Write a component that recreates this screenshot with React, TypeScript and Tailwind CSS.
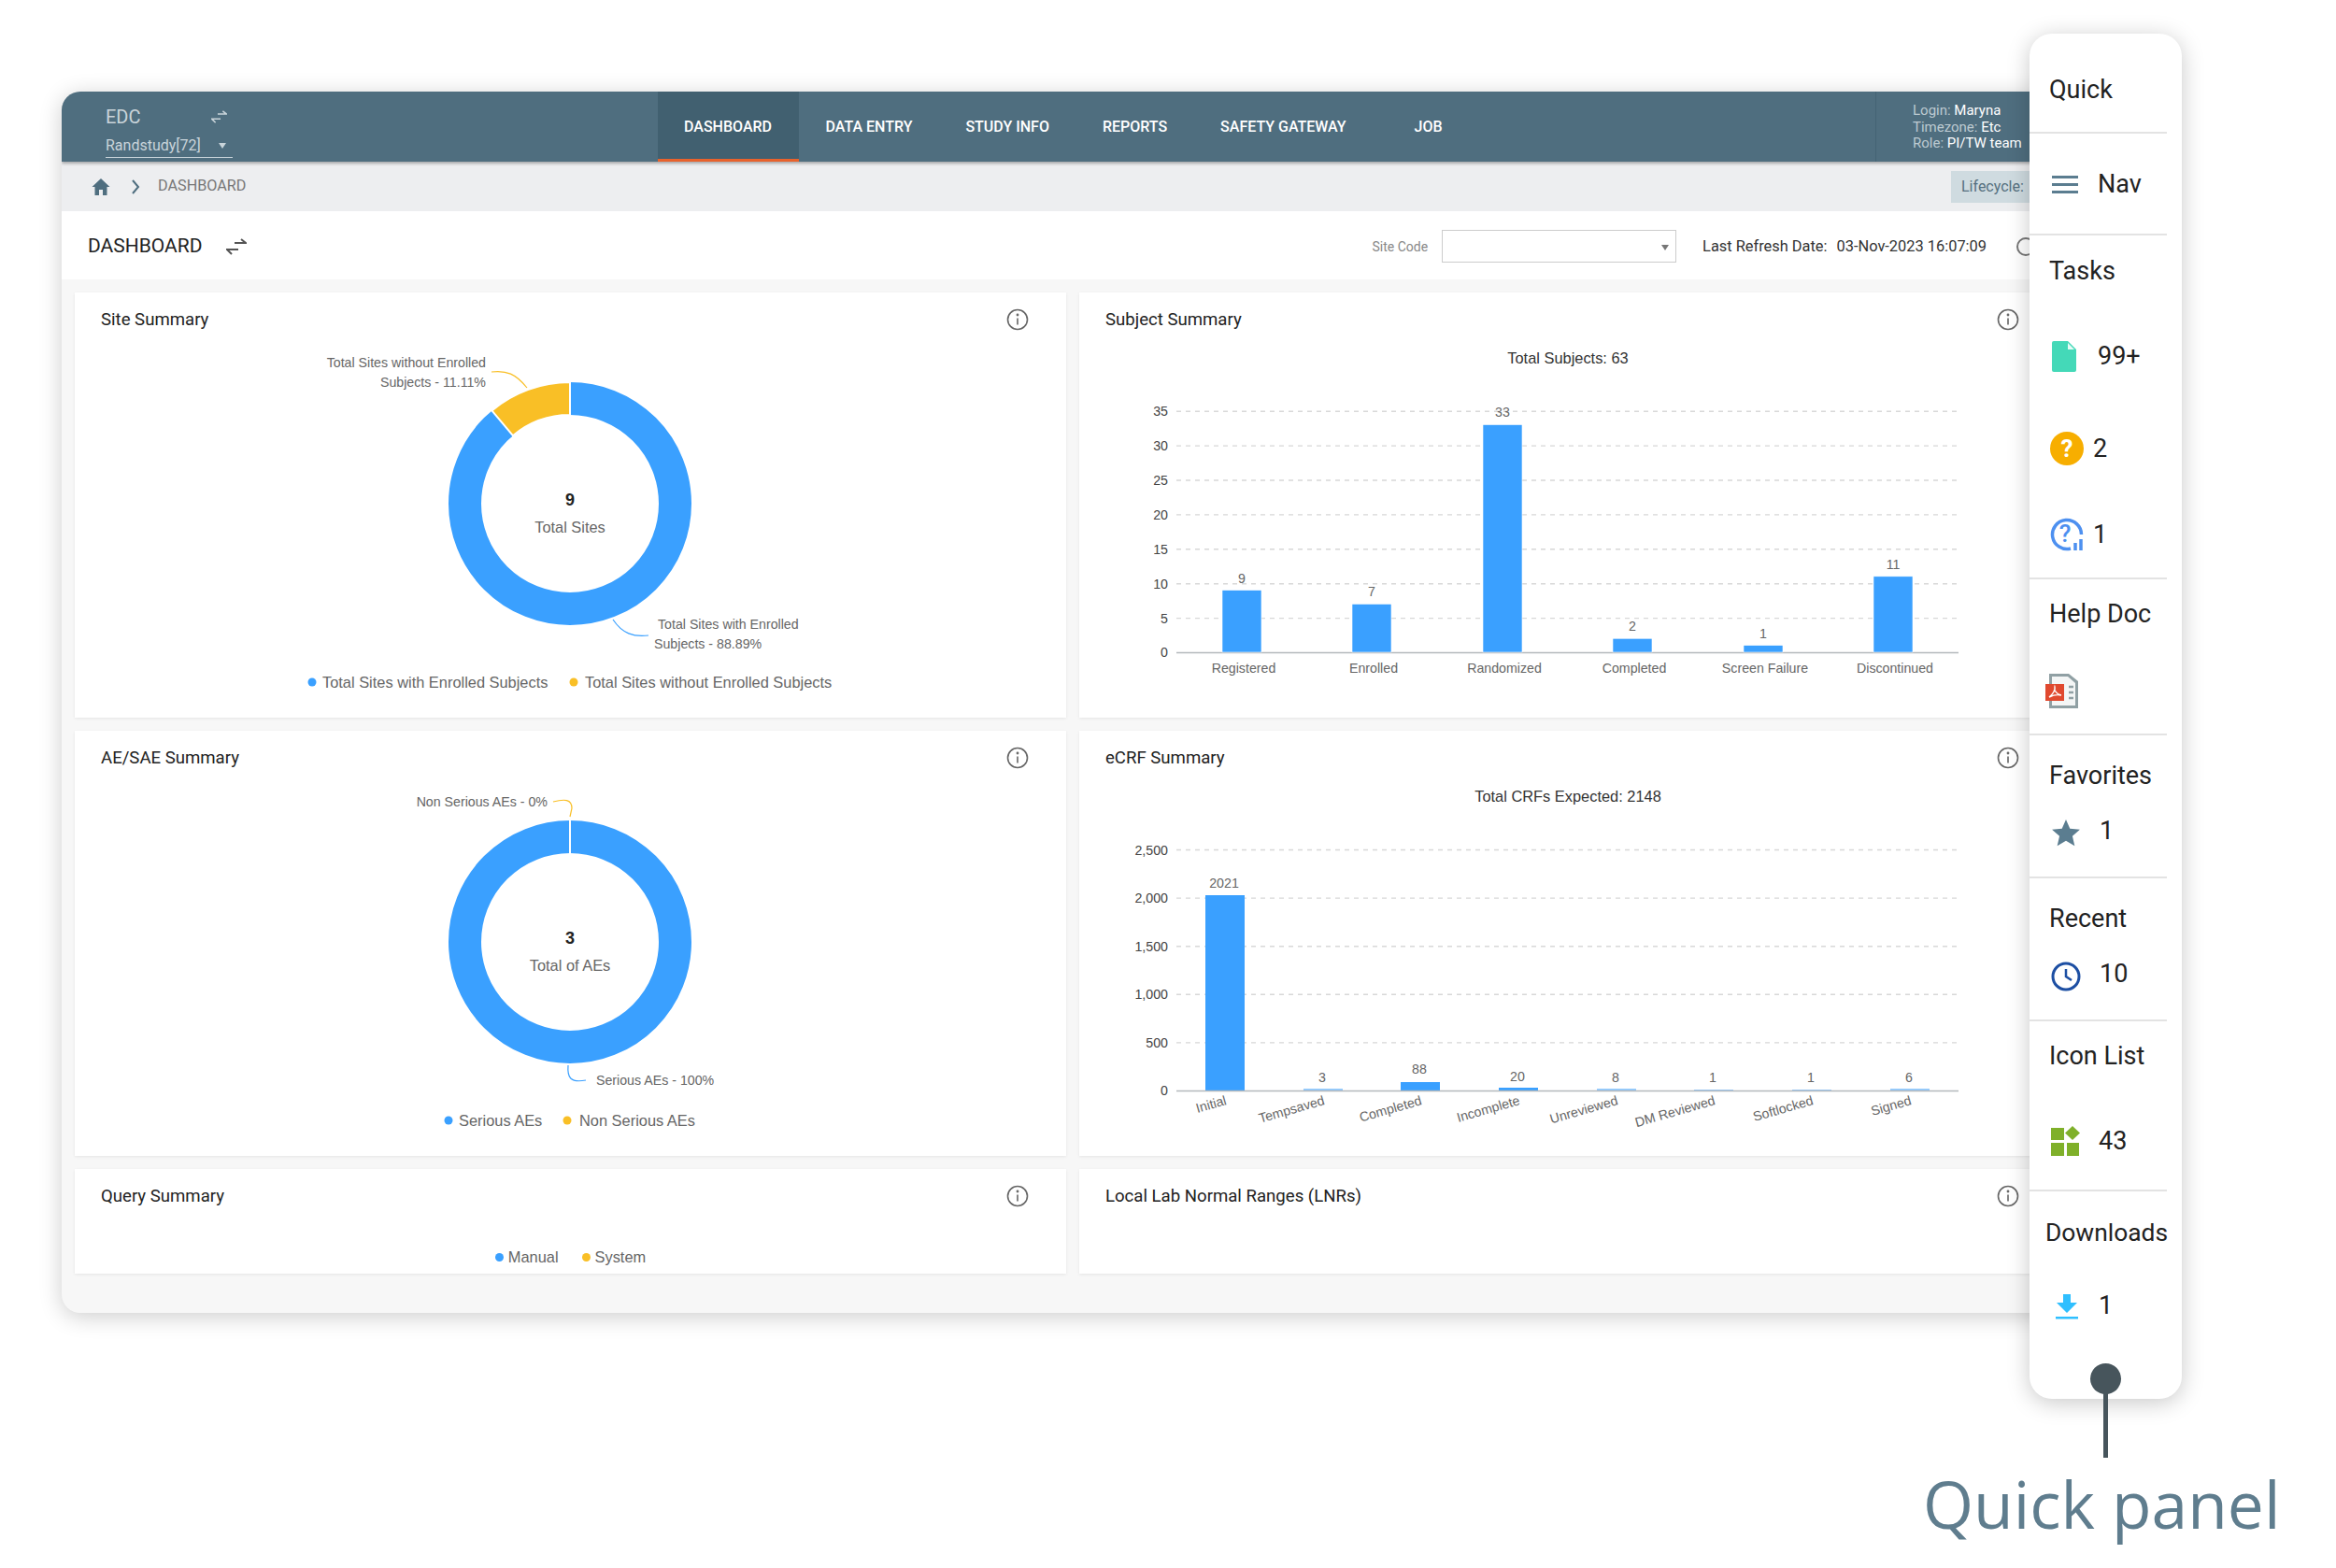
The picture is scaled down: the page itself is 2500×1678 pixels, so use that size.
const BLUE = "#3aa0ff";
const YELLOW = "#f9bf26";

const subjectBars = [
  { label: "Registered", value: 9, x: 1329 },
  { label: "Enrolled", value: 7, x: 1468 },
  { label: "Randomized", value: 33, x: 1608 },
  { label: "Completed", value: 2, x: 1747 },
  { label: "Screen Failure", value: 1, x: 1887 },
  { label: "Discontinued", value: 11, x: 2026 },
];

const crfBars = [
  { label: "Initial", value: 2021, x: 1311, h: 209, labelY: 946 },
  { label: "Tempsaved", value: 3, x: 1416, h: 2, labelY: 1154 },
  { label: "Completed", value: 88, x: 1520, h: 9, labelY: 1145 },
  { label: "Incomplete", value: 20, x: 1625, h: 3, labelY: 1153 },
  { label: "Unreviewed", value: 8, x: 1730, h: 2, labelY: 1154 },
  { label: "DM Reviewed", value: 1, x: 1834, h: 1, labelY: 1154 },
  { label: "Softlocked", value: 1, x: 1939, h: 1, labelY: 1154 },
  { label: "Signed", value: 6, x: 2044, h: 2, labelY: 1154 },
];

const SwapIcon = ({ className }: { className?: string }) => (
  <svg className={className} viewBox="0 0 22 18" fill="none" stroke="currentColor" strokeWidth="2">
    <path d="M9 5h11M16 1l5 4H16" />
    <path d="M13 12H2M6 17l-5-5h5" />
  </svg>
);

const InfoIcon = () => (
  <svg className="w-[24px] h-[24px] text-[#666]" viewBox="0 0 24 24" fill="none" stroke="currentColor" strokeWidth="1.6">
    <circle cx="12" cy="12" r="10.5" />
    <path d="M12 10.5v7" />
    <circle cx="12" cy="7" r="0.6" fill="currentColor" />
  </svg>
);

const Card = ({ title, children, className }: { title: string; children?: React.ReactNode; className: string }) => (
  <div className={`bg-white shadow-[0_1px_3px_rgba(0,0,0,0.08)] ${className}`}>
    <div className="h-[58px] flex items-center justify-between pl-[28px] pr-[40px]">
      <span className="mt-[2px] text-[18.6px] text-[#222]">{title}</span>
      <InfoIcon />
    </div>
    {children}
  </div>
);

const ChartText = ({ x, y, children, anchor = "start", size = 14.2, fill = "#666", weight, transform }: any) => (
  <text
    x={x}
    y={y}
    textAnchor={anchor}
    dominantBaseline="central"
    fontSize={size}
    fill={fill}
    fontWeight={weight}
    transform={transform}
    fontFamily="'Liberation Sans', Arial, sans-serif"
  >
    {children}
  </text>
);

const SiteDonut = () => (
  <svg className="block w-[1061px] h-[397px]" viewBox="80 371 1061 397">
    <circle cx="610" cy="539" r="112.5" fill="none" stroke={BLUE} strokeWidth="35" />
    <path d="M610 409 A130 130 0 0 0 526.4 439.4 L548.9 466.2 A95 95 0 0 1 610 444 Z" fill={YELLOW} stroke="#fff" strokeWidth="2" />
    <path d="M526 398 C542 396 552 400 564 415" fill="none" stroke={YELLOW} strokeWidth="1.2" />
    <path d="M656 663 C666 678 678 682 694 680" fill="none" stroke={BLUE} strokeWidth="1.2" />
    <ChartText x={520} y={388} anchor="end">Total Sites without Enrolled</ChartText>
    <ChartText x={520} y={409} anchor="end">Subjects - 11.11%</ChartText>
    <ChartText x={704} y={668}>Total Sites with Enrolled</ChartText>
    <ChartText x={700} y={689}>Subjects - 88.89%</ChartText>
    <ChartText x={610} y={535} anchor="middle" size={18} fill="#222" weight="700">9</ChartText>
    <ChartText x={610} y={564} anchor="middle" size={16.4}>Total Sites</ChartText>
    <circle cx="334" cy="730" r="4.5" fill={BLUE} />
    <ChartText x={345} y={730} size={16.4}>Total Sites with Enrolled Subjects</ChartText>
    <circle cx="614" cy="730" r="4.5" fill={YELLOW} />
    <ChartText x={626} y={730} size={16.4}>Total Sites without Enrolled Subjects</ChartText>
  </svg>
);

const AeDonut = () => (
  <svg className="block w-[1061px] h-[397px]" viewBox="80 841 1061 397">
    <circle cx="610" cy="1009" r="112.5" fill="none" stroke={BLUE} strokeWidth="35" />
    <path d="M610 878v36" stroke="#fff" strokeWidth="2" />
    <path d="M592 859 C604 856 612 856 612 866 L610 875" fill="none" stroke={YELLOW} strokeWidth="1.2" />
    <path d="M608 1141 C607 1154 610 1160 627 1157" fill="none" stroke={BLUE} strokeWidth="1.2" />
    <ChartText x={586} y={859} anchor="end">Non Serious AEs - 0%</ChartText>
    <ChartText x={638} y={1157}>Serious AEs - 100%</ChartText>
    <ChartText x={610} y={1005} anchor="middle" size={18} fill="#222" weight="700">3</ChartText>
    <ChartText x={610} y={1034} anchor="middle" size={16.4}>Total of AEs</ChartText>
    <circle cx="480" cy="1200" r="4.5" fill={BLUE} />
    <ChartText x={491} y={1200} size={16.4}>Serious AEs</ChartText>
    <circle cx="607" cy="1200" r="4.5" fill={YELLOW} />
    <ChartText x={620} y={1200} size={16.4}>Non Serious AEs</ChartText>
  </svg>
);

const SubjectChart = () => (
  <svg className="block w-[1046px] h-[397px]" viewBox="1155 371 1046 397">
    <ChartText x={1678} y={383} anchor="middle" size={16.4} fill="#333">Total Subjects: 63</ChartText>
    {[35, 30, 25, 20, 15, 10, 5].map((tick) => {
      const y = 698.5 - tick * 7.38;
      return (
        <g key={tick}>
          <path d={`M1259 ${y}H2096`} stroke="#d8d8d8" strokeWidth="1.4" strokeDasharray="5 5" />
          <ChartText x={1250} y={y} anchor="end" fill="#444">{tick}</ChartText>
        </g>
      );
    })}
    <path d="M1259 698.5H2096" stroke="#b5b9bd" strokeWidth="1.5" />
    <ChartText x={1250} y={698} anchor="end" fill="#444">0</ChartText>
    {subjectBars.map((bar) => {
      const h = bar.value * 7.38;
      return (
        <g key={bar.label}>
          <rect x={bar.x - 21} y={698 - h} width="42" height={h} fill={BLUE} stroke="#fff" strokeWidth="0.6" />
          <ChartText x={bar.x} y={698 - h - 13} anchor="middle">{bar.value}</ChartText>
          <ChartText x={bar.x + 2} y={715} anchor="middle">{bar.label}</ChartText>
        </g>
      );
    })}
  </svg>
);

const CrfChart = () => (
  <svg className="block w-[1046px] h-[397px]" viewBox="1155 841 1046 397">
    <ChartText x={1678} y={853} anchor="middle" size={16.4} fill="#333">Total CRFs Expected: 2148</ChartText>
    {[2500, 2000, 1500, 1000, 500].map((tick) => {
      const y = 1168.5 - (tick / 500) * 51.6;
      return (
        <g key={tick}>
          <path d={`M1259 ${y}H2096`} stroke="#d8d8d8" strokeWidth="1.4" strokeDasharray="5 5" />
          <ChartText x={1250} y={y} anchor="end" fill="#444">{tick.toLocaleString("en-US")}</ChartText>
        </g>
      );
    })}
    {crfBars.map((bar) => (
      <g key={bar.label}>
        <rect x={bar.x - 21} y={1168 - bar.h} width="42" height={bar.h} fill={BLUE} fillOpacity={bar.h < 3 ? 0.55 : 1} />
        <ChartText x={bar.x - 1} y={bar.labelY} anchor="middle">{bar.value}</ChartText>
        <ChartText x={bar.x + 1} y={1178} anchor="end" transform={`rotate(-16 ${bar.x + 1} 1178)`}>{bar.label}</ChartText>
      </g>
    ))}
    <path d="M1259 1168.5H2096" stroke="#b5b9bd" strokeWidth="1.5" />
    <ChartText x={1250} y={1168} anchor="end" fill="#444">0</ChartText>
  </svg>
);

const Header = () => (
  <div className="h-[75px] bg-[#4f6e7f] flex shadow-[0_2px_3px_rgba(0,0,0,0.3)] relative">
    <div className="w-[638px] pl-[47px] pt-[14px] text-[#c9d4da]">
      <div className="flex items-center w-[136px] justify-between pr-[6px] text-[20px] leading-[26px]">
        <span>EDC</span>
        <SwapIcon className="w-[17px] h-[14px]" />
      </div>
      <div className="mt-[6px] w-[136px] flex items-center justify-between border-b border-[#c9d4da] text-[16px] leading-[24px] pr-[7px]">
        <span>Randstudy[72]</span>
        <span className="w-0 h-0 border-x-[4px] border-x-transparent border-t-[6px] border-t-[#c9d4da]" />
      </div>
    </div>
    <div className="flex text-[16px] font-medium text-white">
      <div className="pl-[28px] pr-[29px] pt-[3px] flex items-center bg-[#416070] border-b-[3px] border-[#e8622c]">DASHBOARD</div>
      <div className="px-[28.500px] flex items-center">DATA ENTRY</div>
      <div className="px-[28.500px] flex items-center">STUDY INFO</div>
      <div className="px-[28.500px] flex items-center">REPORTS</div>
      <div className="px-[28.500px] flex items-center">SAFETY GATEWAY</div>
      <div className="px-[28.500px] ml-[16px] flex items-center">JOB</div>
    </div>
    <div className="ml-auto w-[208px] border-l border-[#456474] pl-[39px] pt-[12px] text-[15px] leading-[17.5px] text-[#bdcad1] whitespace-nowrap">
      <div>Login: <span className="text-white">Maryna</span></div>
      <div>Timezone: <span className="text-white">Etc</span></div>
      <div>Role: <span className="text-white">PI/TW team</span></div>
    </div>
  </div>
);

const Breadcrumb = () => (
  <div className="h-[53px] bg-[#edeef0] flex items-center pl-[32px]">
    <svg className="w-[20px] h-[20px] text-[#4f6e7f]" viewBox="0 0 20 20" fill="currentColor">
      <path d="M10 1L0.5 10H3.5V19H8V13H12V19H16.5V10H19.5Z" />
    </svg>
    <svg className="w-[10px] h-[16px] ml-[22px] text-[#4f6e7f]" viewBox="0 0 10 16" fill="none" stroke="currentColor" strokeWidth="2">
      <path d="M2 1l6 7-6 7" />
    </svg>
    <span className="ml-[19px] mb-[1px] text-[16.2px] text-[#777]">DASHBOARD</span>
    <div className="ml-auto w-[127px] h-[34px] bg-[#cfdbe0] text-[#55707f] text-[16px] flex items-center pl-[11px]">Lifecycle:</div>
  </div>
);

const TitleBar = () => (
  <div className="h-[73px] bg-white flex items-center pl-[28px]">
    <span className="mt-[3px] text-[21px] text-[#222]">DASHBOARD</span>
    <SwapIcon className="w-[22px] h-[18px] ml-[26px] mt-[3px] text-[#555]" />
    <span className="ml-auto mt-[3px] text-[14px] text-[#888]">Site Code</span>
    <div className="ml-[15px] w-[251px] h-[35px] border border-[#ccc] flex items-center justify-end pr-[7px] mt-[2px]">
      <span className="mt-[2px] w-0 h-0 border-x-[4px] border-x-transparent border-t-[6px] border-t-[#777]" />
    </div>
    <span className="ml-[28px] mt-[3px] text-[16.4px] text-[#333]">Last Refresh Date:</span>
    <span className="ml-[10px] mt-[3px] text-[16.4px] text-[#333]">03-Nov-2023 16:07:09</span>
    <span className="ml-[32px] mt-[2px] w-[20px] h-[20px] rounded-full border-2 border-[#777] mr-[37px]" />
  </div>
);

const PanelHead = ({ children }: { children: React.ReactNode }) => (
  <div className="text-[27px] leading-[32px] text-[#222]">{children}</div>
);

const PanelCount = ({ icon, value, gap, className = "" }: { icon: React.ReactNode; value: string; gap: string; className?: string }) => (
  <div className={`flex items-center ${className}`}>
    <div className="w-[36px] h-[36px] flex items-center justify-center">{icon}</div>
    <span className={`text-[27px] leading-[32px] text-[#222] ${gap}`}>{value}</span>
  </div>
);

const QuickPanel = () => (
  <div className="absolute left-[2172px] top-[36px] w-[163px] h-[1461px] bg-white rounded-[24px] shadow-[0_4px_24px_rgba(0,0,0,0.22)] font-['Roboto',sans-serif] z-10">
    <div className="w-[147px] h-[107px] border-b-2 border-[#e3e3e3] pl-[21px] pt-[44px]">
      <PanelHead>Quick</PanelHead>
    </div>
    <div className="w-[147px] h-[109px] border-b-2 border-[#e3e3e3] pl-[24px] pt-[2px] flex items-center">
      <div className="w-[28px] flex flex-col gap-[5px]">
        <div className="h-[3px] bg-[#5b7d90]" />
        <div className="h-[3px] bg-[#5b7d90]" />
        <div className="h-[3px] bg-[#5b7d90]" />
      </div>
      <span className="ml-[21px] text-[27px] text-[#222]">Nav</span>
    </div>
    <div className="w-[147px] h-[368px] border-b-2 border-[#e3e3e3] pl-[21px] pt-[22px]">
      <PanelHead>Tasks</PanelHead>
      <PanelCount
        className="ml-[-2px] mt-[57px]"
        gap="ml-[18px]"
        value="99+"
        icon={
          <svg className="w-[26px] h-[33px]" viewBox="0 0 26 33" fill="#44d9b8">
            <path d="M2 0H17L26 9V31a2 2 0 0 1-2 2H2a2 2 0 0 1-2-2V2a2 2 0 0 1 2-2Z" />
            <path d="M17 2L24 9H17Z" fill="#e6fbf6" />
          </svg>
        }
      />
      <PanelCount
        className="ml-[1px] mt-[63px]"
        gap="ml-[10px]"
        value="2"
        icon={
          <svg className="w-[36px] h-[36px]" viewBox="0 0 36 36">
            <circle cx="18" cy="18" r="18" fill="#f7ae00" />
            <text x="18" y="27" textAnchor="middle" fontSize="26" fontWeight="700" fill="#fff" fontFamily="Roboto, sans-serif">?</text>
          </svg>
        }
      />
      <PanelCount
        className="ml-[1px] mt-[56px]"
        gap="ml-[10px]"
        value="1"
        icon={
          <svg className="w-[36px] h-[36px]" viewBox="0 0 36 36" fill="none" stroke="#4d90f0" strokeWidth="3.5">
            <path d="M22 33A15.500 15.500 0 1 1 33.500 18" />
            <text x="16" y="26" textAnchor="middle" fontSize="26" fontWeight="500" fill="#4d90f0" stroke="none" fontFamily="Roboto, sans-serif">?</text>
            <path d="M27 27v8M33 23v12" />
          </svg>
        }
      />
    </div>
    <div className="w-[147px] h-[167px] border-b-2 border-[#e3e3e3] pl-[21px] pt-[21px]">
      <PanelHead>Help Doc</PanelHead>
      <svg className="w-[36px] h-[38px] ml-[-4px] mt-[48px]" viewBox="0 0 36 38">
        <path d="M4 0H25L35 8V37H4Z" fill="#90a0a4" />
        <path d="M7 3H24L32 10V34H7Z" fill="#f4f6f6" />
        <path d="M25 14h5M25 20h5M25 26h5" stroke="#90a0a4" strokeWidth="2.5" />
        <rect x="0" y="11" width="20" height="18" fill="#e0492f" />
        <path d="M4 25C8 22 11 17 10 14C9 18 12 22 17 23C12 22 8 23 4 25Z" fill="none" stroke="#fff" strokeWidth="1.4" />
      </svg>
    </div>
    <div className="w-[147px] h-[153px] border-b-2 border-[#e3e3e3] pl-[21px] pt-[27px]">
      <PanelHead>Favorites</PanelHead>
      <PanelCount
        className="mt-[25px]"
        gap="ml-[18px]"
        value="1"
        icon={
          <svg className="w-[32px] h-[32px] mt-[4px]" viewBox="0 0 24 24" fill="#5b7d90">
            <path d="M12 1.500l3.200 7.300 8 .7-6 5.300 1.800 7.900L12 18.500l-7 4.200 1.800-7.900-6-5.300 8-.7z" />
          </svg>
        }
      />
    </div>
    <div className="w-[147px] h-[153px] border-b-2 border-[#e3e3e3] pl-[21px] pt-[27px]">
      <PanelHead>Recent</PanelHead>
      <PanelCount
        className="mt-[25px]"
        gap="ml-[18px]"
        value="10"
        icon={
          <svg className="w-[32px] h-[32px] mt-[5px]" viewBox="0 0 32 32" fill="none" stroke="#1d4fa3" strokeWidth="3">
            <circle cx="16" cy="16" r="14" />
            <path d="M16 8v8l6 4" strokeWidth="2.500" />
          </svg>
        }
      />
    </div>
    <div className="w-[147px] h-[182px] border-b-2 border-[#e3e3e3] pl-[21px] pt-[21px]">
      <PanelHead>Icon List</PanelHead>
      <PanelCount
        className="mt-[57px]"
        gap="ml-[17px]"
        value="43"
        icon={
          <svg className="w-[32px] h-[32px]" viewBox="0 0 32 32" fill="#7fb02a">
            <rect x="0" y="2" width="14" height="13" />
            <rect x="0" y="18" width="14" height="14" />
            <rect x="17" y="18" width="13" height="14" />
            <path d="M23 0L31 7.500L23 15L15 7.500Z" />
          </svg>
        }
      />
    </div>
    <div className="pl-[17px] pt-[28px]">
      <div className="text-[26.4px] leading-[32px] text-[#222]">Downloads</div>
      <PanelCount
        className="ml-[4px] mt-[44px]"
        gap="ml-[17px]"
        value="1"
        icon={
          <svg className="w-[26px] h-[28px] mt-[3px] ml-[2px]" viewBox="0 0 26 28" fill="#2fbfff">
            <path d="M9 0H17V9H24L13 20L2 9H9Z" />
            <rect x="1" y="24" width="24" height="2.500" />
          </svg>
        }
      />
    </div>
  </div>
);

export default function App() {
  return (
    <div className="relative w-[2500px] h-[1678px] bg-white overflow-hidden pl-[66px] pt-[98px] font-['Roboto',sans-serif]">
      <div className="w-[2149px] rounded-[20px] overflow-hidden bg-[#f7f7f7] shadow-[0_4px_24px_rgba(0,0,0,0.2)]">
        <Header />
        <Breadcrumb />
        <TitleBar />
        <div className="grid grid-cols-[1061px_1046px] gap-[14px] p-[14px] pb-[42px]">
          <Card title="Site Summary" className="h-[455px]"><SiteDonut /></Card>
          <Card title="Subject Summary" className="h-[455px]"><SubjectChart /></Card>
          <Card title="AE/SAE Summary" className="h-[455px]"><AeDonut /></Card>
          <Card title="eCRF Summary" className="h-[455px]"><CrfChart /></Card>
          <Card title="Query Summary" className="h-[112px]">
            <div className="mt-[24px] flex justify-center gap-[25px] text-[16.4px] text-[#666] font-['Liberation_Sans',sans-serif]">
              <span className="flex items-center gap-[5px]"><span className="w-[9px] h-[9px] rounded-full bg-[#3aa0ff]" />Manual</span>
              <span className="flex items-center gap-[5px]"><span className="w-[9px] h-[9px] rounded-full bg-[#f9bf26]" />System</span>
            </div>
          </Card>
          <Card title="Local Lab Normal Ranges (LNRs)" className="h-[112px]" />
        </div>
      </div>
      <QuickPanel />
      <div className="absolute left-[2237px] top-[1459px] w-[33px] h-[33px] rounded-full bg-[#47555c] z-20" />
      <div className="absolute left-[2251px] top-[1480px] w-[5px] h-[80px] bg-[#47555c] z-20" />
      <div className="absolute left-[2058px] top-[1559px] text-[69.5px] leading-[100px] text-[#5f7d8e] font-['Open_Sans',sans-serif] whitespace-nowrap">Quick panel</div>
    </div>
  );
}
